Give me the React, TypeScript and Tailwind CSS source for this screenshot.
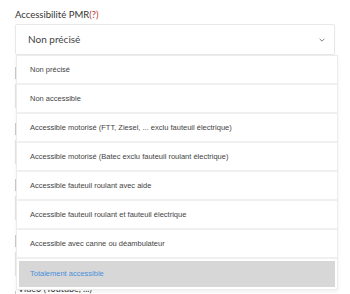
import React from 'react';

const options = [
  'Non précisé',
  'Non accessible',
  'Accessible motorisé (FTT, Ziesel, ... exclu fauteuil électrique)',
  'Accessible motorisé (Batec exclu fauteuil roulant électrique)',
  'Accessible fauteuil roulant avec aide',
  'Accessible fauteuil roulant et fauteuil électrique',
  'Accessible avec canne ou déambulateur',
  'Totalement accessible',
];

// empty inputs of the form that sit behind the open menu
const BgField = () => (
  <div className="flex flex-col gap-[4px]">
    <div className="h-[12px] w-[1px] bg-[#ccc] ml-0" />
    <div className="h-[26px] border border-[#e6e6e6] rounded-[2px]" />
  </div>
);

export default function App() {
  return (
    <div
      className="w-[350px] h-[294px] bg-white relative overflow-hidden px-[15px] pt-[8px]"
      style={{ fontFamily: 'Lato, "Open Sans", sans-serif' }}
    >
      <div className="text-[9.5px] text-[#333] leading-[13px] mb-[3px]">
        Accessibilité PMR<span className="text-[#c0392b]">(?)</span>
      </div>

      {/* Select */}
      <div className="h-[31px] border border-[#e8e8e8] rounded-[2px] flex items-center justify-between pl-[12px] pr-[8px] shadow-[0_1px_2px_rgba(0,0,0,0.04)]">
        <span className="text-[10px] text-[#444]">Non précisé</span>
        <svg width="8" height="8" viewBox="0 0 10 10" fill="none" stroke="#777" strokeWidth="1.2">
          <path d="M2 3.5 L5 6.5 L8 3.5" />
        </svg>
      </div>

      <div className="flex flex-col gap-[14px] mt-[12px]">
        <BgField />
        <BgField />
        <BgField />
        <BgField />
        <BgField />
      </div>
      <div className="absolute left-[18px] top-[284px] text-[9px] leading-[10px] text-[#333]">Vidéo (Youtube, ...)</div>

      {/* Open dropdown */}
      <div
        className="absolute left-[16px] top-[55px] w-[322px] bg-white border border-[#ececec] shadow-[0_2px_4px_rgba(0,0,0,0.06)] flex flex-col"
        style={{ fontFamily: '"Liberation Sans", Arial, sans-serif' }}
      >
        {options.map((o, i) =>
          i === options.length - 1 ? (
            <div key={o} className="h-[30px] p-[2px]">
              <div className="h-full bg-[#d7d7d7] flex items-center pl-[11px] text-[7.5px] text-[#4a90d9]">{o}</div>
            </div>
          ) : (
            <div
              key={o}
              className="h-[29px] flex items-center pl-[13px] text-[7.5px] text-[#444] border-b-2 border-[#f0f0f0]"
            >
              {o}
            </div>
          )
        )}
      </div>
    </div>
  );
}
